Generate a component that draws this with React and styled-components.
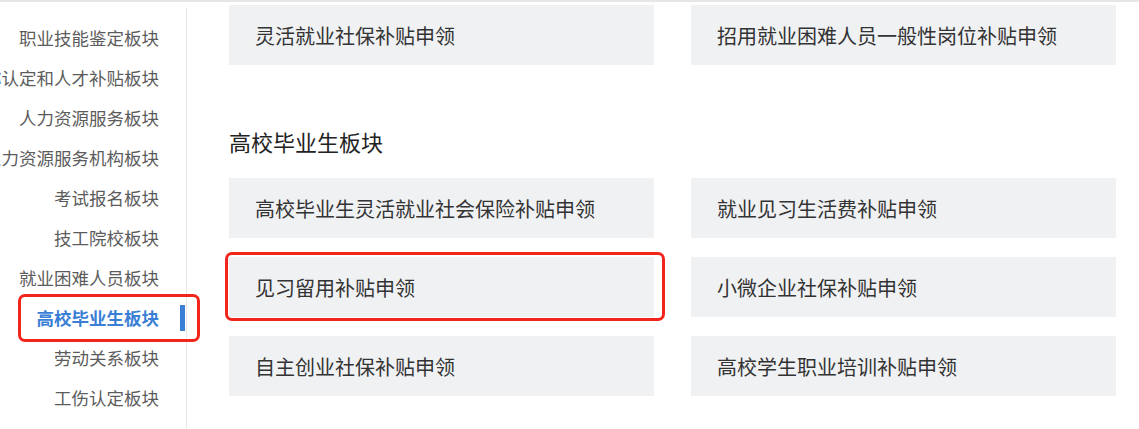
import React from 'react'
import styled, { createGlobalStyle } from 'styled-components';

const GlobalStyle = createGlobalStyle`
  body {
    margin: 0;
    background: #fff;
    font-family: "Noto Sans CJK SC", "Noto Sans", sans-serif;
  }
`

const menu = [
  '职业技能鉴定板块',
  '职称认定和人才补贴板块',
  '人力资源服务板块',
  '人力资源服务机构板块',
  '考试报名板块',
  '技工院校板块',
  '就业困难人员板块',
  '高校毕业生板块',
  '劳动关系板块',
  '工伤认定板块',
]

const topCards = ['灵活就业社保补贴申领', '招用就业困难人员一般性岗位补贴申领']

const graduateCards = [
  { title: '高校毕业生灵活就业社会保险补贴申领' },
  { title: '就业见习生活费补贴申领' },
  { title: '见习留用补贴申领', marked: true },
  { title: '小微企业社保补贴申领' },
  { title: '自主创业社保补贴申领' },
  { title: '高校学生职业培训补贴申领' },
]

const App = () => {
  return (
    <Page>
      <GlobalStyle />
      <Sidebar>
        {menu.map((name) => (
          <MenuItem key={name} $active={name === '高校毕业生板块'}>
            <span>{name}</span>
            {name === '高校毕业生板块' && <SideMark />}
          </MenuItem>
        ))}
      </Sidebar>
      <Main>
        <CardGrid>
          {topCards.map((t) => (
            <Card key={t}>{t}</Card>
          ))}
        </CardGrid>
        <SectionTitle>高校毕业生板块</SectionTitle>
        <CardGrid>
          {graduateCards.map((c) => (
            <Card key={c.title}>
              {c.title}
              {c.marked && <CardMark />}
            </Card>
          ))}
        </CardGrid>
      </Main>
    </Page>
  )
}

const Page = styled.div`
  display: flex;
  align-items: flex-start;
  height: 429px;
  box-sizing: border-box;
  border-top: 2px solid #e6e6e6;
  overflow: hidden;
`

const Sidebar = styled.nav`
  flex: 0 0 186px;
  width: 186px;
  margin-top: 6px;
  padding-top: 9px;
  min-height: 440px;
  border-right: 1px solid #e8e8e8;
  display: flex;
  flex-direction: column;
`

const MenuItem = styled.div`
  position: relative;
  height: 40px;
  display: flex;
  align-items: center;
  justify-content: flex-end;
  padding-right: 27px;
  white-space: nowrap;
  font-size: 17.5px;
  color: ${(p) => (p.$active ? '#3a7fd5' : '#5c5c5c')};
  font-weight: ${(p) => (p.$active ? 700 : 400)};
`

const SideMark = styled.i`
  position: absolute;
  left: 18px;
  top: -3px;
  width: 182px;
  height: 48px;
  box-sizing: border-box;
  border: 3px solid #f2251c;
  border-radius: 7px;
  z-index: 2;

  &::after {
    content: '';
    position: absolute;
    right: 12px;
    top: 8px;
    width: 5px;
    height: 26px;
    background: #3a7fd5;
  }
`

const Main = styled.main`
  flex: 1;
  padding: 3px 0 0 42px;
`

const CardGrid = styled.div`
  display: grid;
  grid-template-columns: 425px 425px;
  column-gap: 37px;
  row-gap: 19px;
`

const Card = styled.div`
  position: relative;
  height: 60px;
  display: flex;
  align-items: center;
  padding-left: 26px;
  background: #f0f1f3;
  font-size: 20px;
  color: #333;
  white-space: nowrap;
`

const CardMark = styled.i`
  position: absolute;
  left: -4px;
  top: -5px;
  right: -11px;
  bottom: -4px;
  border: 3px solid #f2251c;
  border-radius: 7px;
`

const SectionTitle = styled.h2`
  margin: 61px 0 22px;
  height: 30px;
  line-height: 30px;
  font-size: 22px;
  font-weight: 400;
  color: #222;
`

export default App
